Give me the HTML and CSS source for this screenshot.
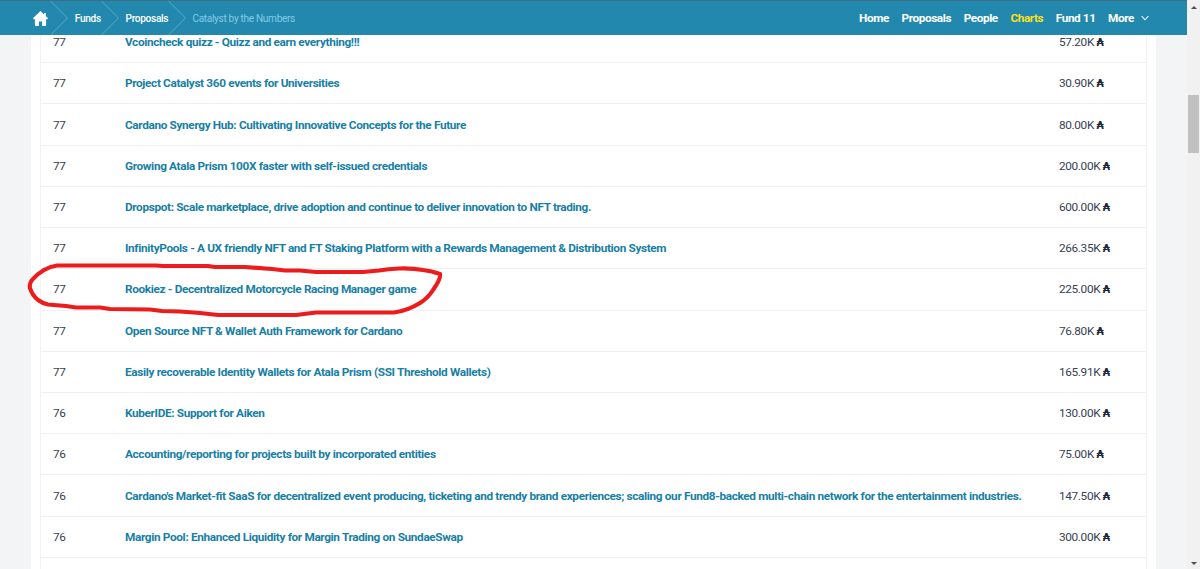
FILE: index.html
```
<!DOCTYPE html>
<html lang="en">
<head>
    <meta charset="UTF-8">
    <meta name="viewport" content="width=device-width, initial-scale=1.0">
    <title>Catalyst by the Numbers</title>
    <link rel="stylesheet" href="styles.css">
</head>
<body>
    <div class="page">
        <header class="topbar">
            <nav class="breadcrumb">
                <a class="home" href="#">
                    <svg width="15" height="15" viewBox="0 0 15 15"><path d="M7.5 0 0.2 7Q-0.2 8.2 1 8.2H1.9V14.2Q1.9 15 2.7 15H5.9V10.5H9.1V15H12.3Q13.1 15 13.1 14.2V8.2H14Q15.2 8.2 14.8 7L12.8 5.1V2H11V3.4Z" fill="#fff"/></svg>
                </a>
                <svg class="sep" width="18" height="34" viewBox="0 0 18 34"><path d="M0.5 0 17.5 17 0.5 34"/></svg>
                <a class="funds" href="#">Funds</a>
                <svg class="sep" width="18" height="34" viewBox="0 0 18 34"><path d="M0.5 0 17.5 17 0.5 34"/></svg>
                <a class="proposals" href="#">Proposals</a>
                <svg class="sep" width="18" height="34" viewBox="0 0 18 34"><path d="M0.5 0 17.5 17 0.5 34"/></svg>
                <span class="current">Catalyst by the Numbers</span>
            </nav>
            <nav class="menu">
                <a href="#">Home</a>
                <a href="#">Proposals</a>
                <a href="#">People</a>
                <a class="active" href="#">Charts</a>
                <a href="#">Fund 11</a>
                <a class="more" href="#">More
                    <svg width="8" height="6" viewBox="0 0 8 6"><path d="M0.6 1 4 4.8 7.4 1" fill="none" stroke="#fff" stroke-width="1.1"/></svg>
                </a>
            </nav>
        </header>
        <main class="content">
            <div class="card">
                <div class="table">
                    <div class="row"><span>77</span><a href="#">Vcoincheck quizz - Quizz and earn everything!!!</a><span>57.20K <b>₳</b></span></div>
                    <div class="row"><span>77</span><a href="#">Project Catalyst 360 events for Universities</a><span>30.90K <b>₳</b></span></div>
                    <div class="row"><span>77</span><a href="#">Cardano Synergy Hub: Cultivating Innovative Concepts for the Future</a><span>80.00K <b>₳</b></span></div>
                    <div class="row"><span>77</span><a href="#">Growing Atala Prism 100X faster with self-issued credentials</a><span>200.00K <b>₳</b></span></div>
                    <div class="row"><span>77</span><a href="#">Dropspot: Scale marketplace, drive adoption and continue to deliver innovation to NFT trading.</a><span>600.00K <b>₳</b></span></div>
                    <div class="row"><span>77</span><a href="#">InfinityPools - A UX friendly NFT and FT Staking Platform with a Rewards Management &amp; Distribution System</a><span>266.35K <b>₳</b></span></div>
                    <div class="row"><span>77</span><a href="#">Rookiez - Decentralized Motorcycle Racing Manager game</a><span>225.00K <b>₳</b></span></div>
                    <div class="row"><span>77</span><a href="#">Open Source NFT &amp; Wallet Auth Framework for Cardano</a><span>76.80K <b>₳</b></span></div>
                    <div class="row"><span>77</span><a href="#">Easily recoverable Identity Wallets for Atala Prism (SSI Threshold Wallets)</a><span>165.91K <b>₳</b></span></div>
                    <div class="row"><span>76</span><a href="#">KuberIDE: Support for Aiken</a><span>130.00K <b>₳</b></span></div>
                    <div class="row"><span>76</span><a href="#">Accounting/reporting for projects built by incorporated entities</a><span>75.00K <b>₳</b></span></div>
                    <div class="row"><span>76</span><a href="#">Cardano's Market-fit SaaS for decentralized event producing, ticketing and trendy brand experiences; scaling our Fund8-backed multi-chain network for the entertainment industries.</a><span>147.50K <b>₳</b></span></div>
                    <div class="row"><span>76</span><a href="#">Margin Pool: Enhanced Liquidity for Margin Trading on SundaeSwap</a><span>300.00K <b>₳</b></span></div>
                    <div class="row"></div>
                </div>
            </div>
        </main>
    </div>
    <div class="scrollbar">
        <div class="arrow up"></div>
        <div class="thumb"></div>
        <div class="arrow down"></div>
    </div>
    <svg class="marker" width="430" height="64" viewBox="20 258 430 64">
        <path d="M440 274Q432 271 423 270Q412 268 399 268.5Q388 269 379 270.5L363 272H316L300 270.5H285L272 269L245 267L215 267L208 266H163L156 265.5H57Q50 266.5 44 270Q37 274 32 280Q29 284 30 288Q32 295 38 300Q42 303 48 304.5L66 306L76 307.5H100L110 309L150 309.5L162 311L180 311.5L200 313L218 315H296L316 312.5H394Q407 311 420 303Q428 298 433 290Q441 279 440 274Z"/>
    </svg>
</body>
</html>
```
FILE: styles.css
```
* {
    box-sizing: border-box;
}
body {
    margin: 0;
    height: 569px;
    display: flex;
    overflow: hidden;
    font-family: Roboto, "DejaVu Sans", sans-serif;
    font-size: 11.8px;
    letter-spacing: -0.35px;
    color: #374151;
    background-color: #f3f4f6;
}
a {
    color: inherit;
    text-decoration: none;
}
.page {
    width: 1187px;
    display: flex;
    flex-direction: column;
}
.topbar {
    height: 35px;
    flex-shrink: 0;
    display: flex;
    justify-content: space-between;
    border-top: 1px solid #3d6f80;
    background-color: #2288ad;
    color: #fff;
}
.breadcrumb {
    display: flex;
    align-items: center;
    font-size: 10.1px;
    font-weight: 500;
    letter-spacing: -0.32px;
    white-space: nowrap;
}
.home {
    width: 50px;
    padding-left: 33px;
    display: flex;
}
.sep {
    margin-right: 6.8px;
}
.sep path {
    fill: none;
    stroke: #65b4d2;
    stroke-width: 0.8;
}
.funds {
    width: 26px;
}
.proposals {
    width: 42px;
}
.current {
    font-weight: 400;
    color: #83cbe8;
}
.menu {
    display: flex;
    align-items: center;
    gap: 12.6px;
    padding-right: 38px;
    font-weight: 700;
    letter-spacing: -0.42px;
}
.menu .active {
    color: #fbdf1e;
}
.more {
    display: flex;
    align-items: center;
    gap: 7px;
}
.content {
    flex: 1;
    padding: 0 31px;
    overflow: hidden;
}
.card {
    background-color: #fff;
    padding: 0 9px;
}
.table {
    margin-top: -14px;
    border: 1px solid #f1f3f9;
}
.row {
    height: 41.23px;
    display: grid;
    grid-template-columns: 72px 934px 1fr;
    align-items: center;
    padding-left: 12px;
    border-bottom: 1px solid #edf0f7;
    white-space: nowrap;
}
.row a {
    font-weight: 700;
    color: #177fa6;
}
.row b {
    font-family: "DejaVu Sans", sans-serif;
    font-size: 10.5px;
    line-height: 1;
    color: #1f2937;
}
.scrollbar {
    width: 13px;
    display: flex;
    flex-direction: column;
    align-items: center;
    background-color: #f1f1f1;
}
.thumb {
    width: 11px;
    height: 58px;
    margin-top: 86px;
    background-color: #c1c1c1;
}
.arrow {
    border: 3px solid transparent;
}
.up {
    margin-top: 3px;
    border-bottom-color: #505050;
}
.down {
    margin-top: auto;
    margin-bottom: 1px;
    border-top-color: #505050;
}
.marker {
    position: absolute;
    left: 20px;
    top: 258px;
}
.marker path {
    fill: none;
    stroke: #ec1c1c;
    stroke-width: 4.2;
    stroke-linejoin: round;
}
```
